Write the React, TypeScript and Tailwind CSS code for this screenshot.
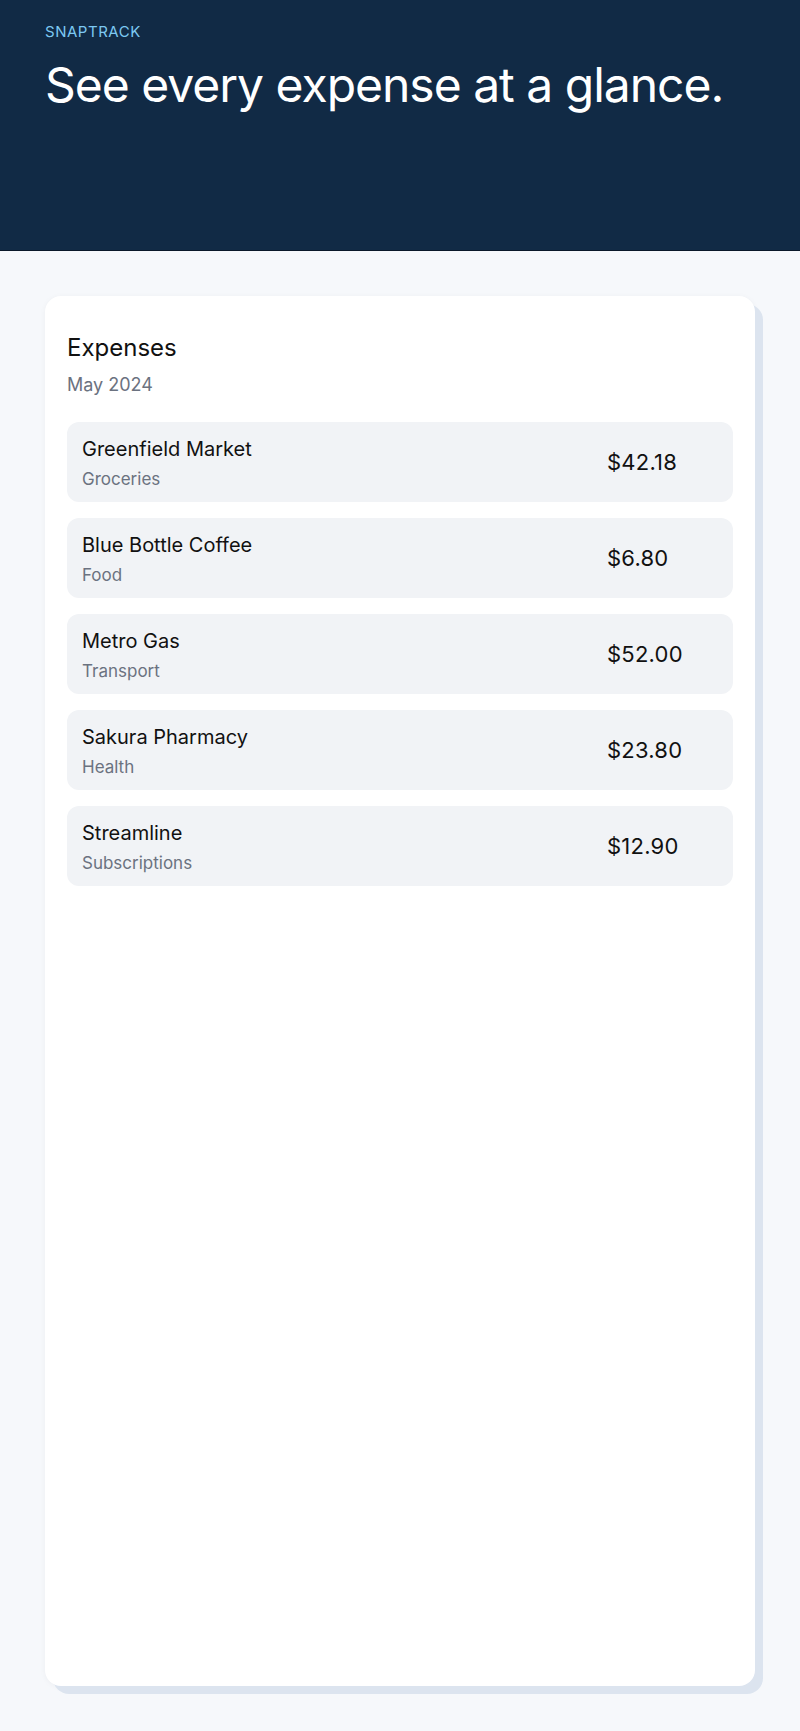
const expenses = [
  { name: "Greenfield Market", category: "Groceries", amount: "$42.18" },
  { name: "Blue Bottle Coffee", category: "Food", amount: "$6.80" },
  { name: "Metro Gas", category: "Transport", amount: "$52.00" },
  { name: "Sakura Pharmacy", category: "Health", amount: "$23.80" },
  { name: "Streamline", category: "Subscriptions", amount: "$12.90" },
];

export default function App() {
  return (
    <div className="flex min-h-[1731px] flex-col bg-[#f6f8fb] font-['Inter','Liberation_Sans',sans-serif]">
      {/* header */}
      <header className="h-[251px] border-b border-[#0a1829] bg-[#112a45] px-[45px] pt-[22px]">
        <div className="text-[15px] leading-5 tracking-[0.035em] text-[#7cc8f2]">SNAPTRACK</div>
        <h1 className="mt-[19px] text-[48px] leading-[48px] tracking-[-0.021em] text-white">
          See every expense at a glance.
        </h1>
      </header>

      <main className="flex flex-1 flex-col p-[45px]">
        <div className="flex-1 rounded-2xl bg-white px-[22px] pt-9 shadow-[8px_8px_0_#dce4ef,0_1px_6px_rgba(15,23,42,0.04)]">
          <h2 className="text-[24px] leading-8 text-[#111]">Expenses</h2>
          <p className="mt-[7px] text-[18px] leading-7 text-[#6b7280]">May 2024</p>

          <div className="mt-[23px] flex flex-col gap-4">
            {expenses.map((e) => (
              <div
                key={e.name}
                className="flex h-[80px] items-center justify-between rounded-xl bg-[#f1f3f6] px-[15px]"
              >
                <div className="flex flex-col pt-[2px]">
                  <span className="text-[20px] leading-7 text-[#111]">{e.name}</span>
                  <span className="mt-[4px] text-[17px] leading-6 text-[#6b7280]">{e.category}</span>
                </div>
                <div className="w-[111px] text-[22px] leading-7 tracking-[0.01em] text-[#111]">{e.amount}</div>
              </div>
            ))}
          </div>
        </div>
      </main>
    </div>
  );
}
